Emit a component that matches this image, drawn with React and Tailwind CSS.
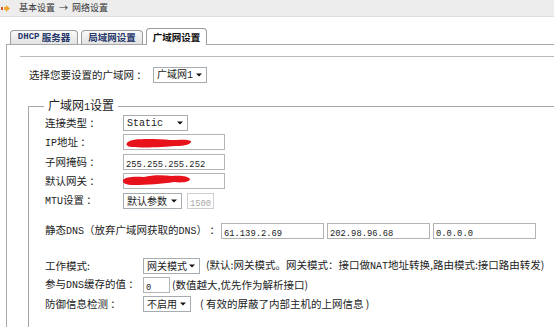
import React from 'react';

// latin runs use a narrow mono so they sit at half the CJK cell, like the original
function M({ children }) {
  return <span className="font-['Liberation_Mono',monospace] text-[10px]">{children}</span>;
}

function Select({ className, children }) {
  return (
    <div className={'flex h-[16px] shrink-0 items-center justify-between whitespace-nowrap border border-[#a5acb2] bg-white pl-[3px] pr-[4px] text-[10px] ' + className}>
      <span className="leading-none">{children}</span>
      <svg width="6" height="4" viewBox="0 0 6 4" className="shrink-0">
        <path d="M0 0.5h6L3 3.5z" fill="#111" />
      </svg>
    </div>
  );
}

function Field({ className, value, disabled, children }) {
  const tone = disabled ? 'border-[#cfcfcf] text-[#a8a8a8] ' : 'border-[#b4b4b4] text-[#222] ';
  return (
    <div className={'relative h-[16px] shrink-0 border bg-white ' + tone + className}>
      <input
        readOnly
        value={value}
        className="h-full w-full bg-transparent px-[2px] font-['Liberation_Mono',monospace] text-[8.8px] outline-none"
      />
      {children}
    </div>
  );
}

function Scribble({ className, d }) {
  return (
    <svg className={'pointer-events-none absolute ' + className} width="70" height="13" viewBox="0 0 70 13">
      <path d={d} fill="#e8121a" />
    </svg>
  );
}

export default function App() {
  return (
    <div className="h-[327px] w-[554px] overflow-hidden bg-white font-['Noto_Sans_CJK_SC',sans-serif] text-[10.5px] text-[#222]">
      {/* breadcrumb bar */}
      <div className="flex h-[17px] items-center gap-[9px] border-b border-[#dedede] bg-[#ededed] pl-[1px] text-[9px] text-[#333]">
        <svg width="9" height="7" viewBox="0 0 9 7">
          <rect x="0" y="2" width="2" height="3" fill="#d9532b" />
          <path d="M3 2h2V0l4 3.5L5 7V5H3z" fill="#f0a830" />
        </svg>
        <span className="whitespace-pre">基本设置  →  网络设置</span>
      </div>

      {/* tabs */}
      <div className="relative z-10 -mb-px mt-[11px] flex h-[17px] items-end gap-[3px] pl-[10px] text-[9.5px] font-bold">
        <div className="mb-px flex h-[14px] w-[68px] items-center justify-center rounded-t-[4px] border border-b-0 border-[#9c9c9c] bg-gradient-to-b from-[#fafafa] to-[#e2e2e2] text-[#26386a]">
          <span className="font-['Liberation_Mono',monospace] text-[9px]">DHCP</span>&nbsp;服务器
        </div>
        <div className="mb-px flex h-[14px] w-[62px] items-center justify-center rounded-t-[4px] border border-b-0 border-[#9c9c9c] bg-gradient-to-b from-[#fafafa] to-[#e2e2e2] text-[#26386a]">
          局域网设置
        </div>
        <div className="flex h-[17px] w-[61px] items-center justify-center rounded-t-[4px] border border-b-0 border-[#9c9c9c] bg-white text-[#111]">
          广域网设置
        </div>
      </div>

      {/* panel */}
      <div className="ml-[6px] h-[300px] border-l border-t border-[#a9a9a9]">
        <div className="ml-[13px] mt-[11px] border-t border-[#bababa]" />

        <div className="ml-[22px] mt-[10px] flex h-[16px] items-center">
          <span className="w-[124px] shrink-0">选择您要设置的广域网 ：</span>
          <Select className="w-[54px]">广域网<M>1</M></Select>
        </div>

        <fieldset className="ml-[21px] mt-[14px] w-[560px] border border-[#a6a6a6] pb-[16px] pl-[16px]">
          <legend className="-ml-px px-[4px] text-[12px] leading-[16px]">广域网<M>1</M>设置</legend>

          <div className="-mt-[3px] flex h-[19px] items-center">
            <span className="w-[78px] shrink-0">连接类型 ：</span>
            <Select className="w-[65px]"><M>Static</M></Select>
          </div>
          <div className="flex h-[20px] items-center">
            <span className="w-[78px] shrink-0"><M>IP</M>地址 ：</span>
            <Field className="w-[102px]" value="">
              <Scribble
                className="left-[1px] top-[1px]"
                d="M3 6C8 2 30 3 45 4C55 4 62 3 66 5C67 8 60 10 50 10C40 11 20 12 7 11C2 11 0 8 3 6Z"
              />
            </Field>
          </div>
          <div className="flex h-[19px] items-center">
            <span className="w-[78px] shrink-0">子网掩码 ：</span>
            <Field className="w-[102px]" value="255.255.255.252" />
          </div>
          <div className="flex h-[20px] items-center">
            <span className="w-[78px] shrink-0">默认网关 ：</span>
            <Field className="w-[102px]" value="">
              <Scribble
                className="left-[-2px] top-[-1px]"
                d="M1 7C3 4 12 3 22 4C30 2 40 2 50 3C58 2 66 3 68 6C68 9 60 10 52 9C40 11 25 12 12 12C4 12 0 10 1 7Z"
              />
            </Field>
          </div>
          <div className="flex h-[19px] items-center">
            <span className="w-[78px] shrink-0"><M>MTU</M>设置 ：</span>
            <Select className="w-[59px]">默认参数</Select>
            <Field className="ml-[5px] w-[27px]" value="1500" disabled />
          </div>

          <div className="mt-[11px] flex h-[19px] items-center">
            <span className="w-[176px] shrink-0 whitespace-nowrap">静态<M>DNS</M>（放弃广域网获取的<M>DNS</M>） ：</span>
            <div className="flex gap-[3px]">
              <Field className="w-[103px]" value="61.139.2.69" />
              <Field className="w-[103px]" value="202.98.96.68" />
              <Field className="w-[103px]" value="0.0.0.0" />
            </div>
          </div>

          <div className="mt-[16px] flex h-[19px] items-center">
            <span className="w-[98px] shrink-0">工作模式:</span>
            <Select className="w-[57px]">网关模式</Select>
            <span className="ml-[6px] whitespace-nowrap">
              (默认:网关模式。网关模式：接口做<M>NAT</M>地址转换,路由模式:接口路由转发)
            </span>
          </div>
          <div className="flex h-[19px] items-center">
            <span className="w-[98px] shrink-0 whitespace-nowrap">参与<M>DNS</M>缓存的值 ：</span>
            <Field className="w-[27px]" value="0" />
            <span className="ml-[2px]">(数值越大,优先作为解析接口)</span>
          </div>
          <div className="flex h-[19px] items-center">
            <span className="w-[98px] shrink-0">防御信息检测 ：</span>
            <Select className="w-[48px]">不启用</Select>
            <span className="ml-[9px]">( 有效的屏蔽了内部主机的上网信息 )</span>
          </div>
        </fieldset>
      </div>
    </div>
  );
}
